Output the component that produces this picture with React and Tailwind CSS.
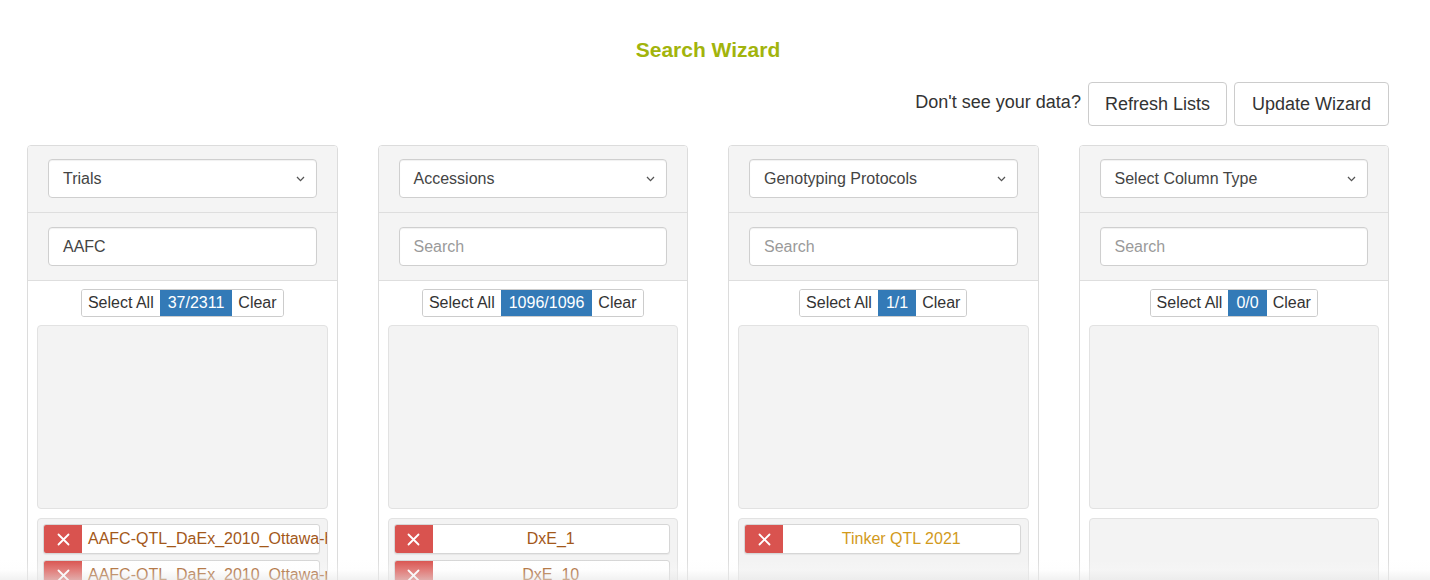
import React from "react";

const Chevron = () => (
  <svg width="9" height="6" viewBox="0 0 9 6" className="absolute right-[11px] top-1/2 -translate-y-1/2">
    <path d="M1 1 L4.5 4.6 L8 1" fill="none" stroke="#555" strokeWidth="1.3" />
  </svg>
);

const XIcon = () => (
  <svg width="13" height="13" viewBox="0 0 13 13">
    <path d="M1.5 1.5 L11.5 11.5 M11.5 1.5 L1.5 11.5" stroke="#fff" strokeWidth="1.8" strokeLinecap="round" />
  </svg>
);

function Item({ text, color, align }) {
  return (
    <div className="flex h-[30px] shrink-0 rounded-[3px] border border-[#d6d6d6] bg-white shadow-[0_1px_1px_rgba(0,0,0,0.05)]">
      <div className="w-[38px] shrink-0 bg-[#d9534f] rounded-l-[2px] flex items-center justify-center">
        <XIcon />
      </div>
      <div
        className={`flex-1 flex items-center whitespace-nowrap text-[16px] ${align === "left" ? "pl-[6px] justify-start" : "justify-center"}`}
        style={{ color }}
      >
        {text}
      </div>
    </div>
  );
}

function Panel({ select, search, placeholder, count, items, color, align }) {
  return (
    <div className="border border-[#dcdcdc] rounded-[4px] bg-white overflow-hidden">
      <div className="bg-[#f4f4f4] px-5 pt-[13px] pb-[14px] border-b border-[#dedede]">
        <div className="relative h-[39px] bg-white border border-[#cfcfcf] rounded-[4px] flex items-center pl-[14px] text-[16px] text-[#444] shadow-[inset_0_1px_1px_rgba(0,0,0,0.06)]">
          {select}
          <Chevron />
        </div>
      </div>
      <div className="bg-[#f4f4f4] px-5 py-[14px] border-b border-[#dedede]">
        <div className={`h-[39px] bg-white border border-[#cfcfcf] rounded-[4px] flex items-center pl-[14px] text-[16px] shadow-[inset_0_1px_1px_rgba(0,0,0,0.06)] ${search ? "text-[#444]" : "text-[#9a9a9a]"}`}>
          {search || placeholder}
        </div>
      </div>
      <div className="px-[9px] pt-[8px]">
        <div className="flex justify-center">
          <div className="flex h-[28px] border border-[#cccccc] rounded-[3px] overflow-hidden text-[16px] text-[#333]">
            <div className="px-[6px] flex items-center bg-white">Select All</div>
            <div className="px-[8px] flex items-center bg-[#337ab7] text-white">{count}</div>
            <div className="px-[6px] flex items-center bg-white">Clear</div>
          </div>
        </div>
        <div className="mt-[8px] h-[184px] bg-[#f3f3f3] border border-[#e2e2e2] rounded-[4px]" />
        <div className="mt-[9px] h-[80px] overflow-hidden bg-[#f3f3f3] border border-[#e2e2e2] rounded-t-[4px] pl-[5px] pr-[7px] pt-[5px] flex flex-col gap-[6px]">
          {items.map((t, i) => (
            <Item key={i} text={t} color={color} align={align} />
          ))}
        </div>
      </div>
    </div>
  );
}

export default function App() {
  return (
    <div className="relative h-[580px] overflow-hidden bg-white" style={{ fontFamily: '"Liberation Sans", Arial, sans-serif' }}>
      <div className="ml-[27px] w-[1362px]">
        <h1 className="pt-[37px] text-center text-[21px] leading-[26px] font-bold text-[#a2b40c]">Search Wizard</h1>
        <div className="mt-[19px] flex justify-end items-center gap-[7px]">
          <span className="text-[18px] text-[#333] -mt-[4px]">Don't see your data?</span>
          <button className="h-[44px] px-[16px] border border-[#cccccc] rounded-[4px] text-[18px] text-[#333] bg-white">Refresh Lists</button>
          <button className="h-[44px] px-[17px] border border-[#cccccc] rounded-[4px] text-[18px] text-[#333] bg-white">Update Wizard</button>
        </div>
        <div className="mt-[19px] grid grid-cols-4 gap-x-10">
          <Panel
            select="Trials"
            search="AAFC"
            count="37/2311"
            items={["AAFC-QTL_DaEx_2010_Ottawa-h", "AAFC-QTL_DaEx_2010_Ottawa-p"]}
            color="#a3581a"
            align="left"
          />
          <Panel
            select="Accessions"
            placeholder="Search"
            count="1096/1096"
            items={["DxE_1", "DxE_10"]}
            color="#a3581a"
          />
          <Panel
            select="Genotyping Protocols"
            placeholder="Search"
            count="1/1"
            items={["Tinker QTL 2021"]}
            color="#d29a1c"
          />
          <Panel
            select="Select Column Type"
            placeholder="Search"
            count="0/0"
            items={[]}
            color="#a3581a"
          />
        </div>
      </div>
      <div className="absolute left-0 right-0 bottom-0 h-[20px] bg-gradient-to-b from-[rgba(255,255,255,0)] via-[rgba(250,250,250,0.25)] to-[rgba(232,232,232,0.6)]" />
    </div>
  );
}
